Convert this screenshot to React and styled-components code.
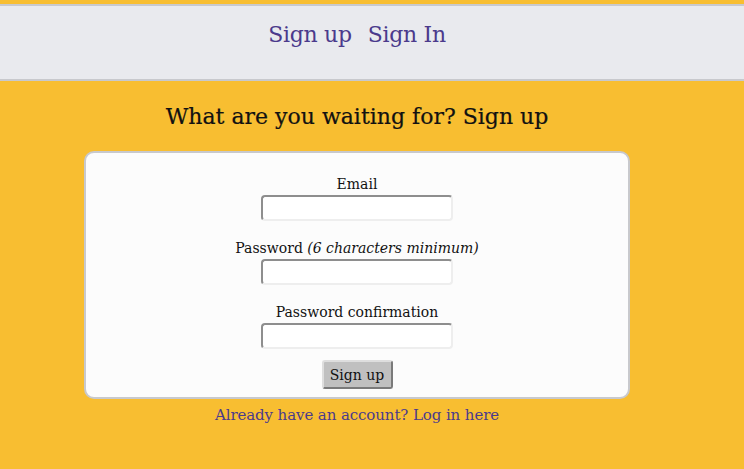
import React from "react";
import styled, { createGlobalStyle } from "styled-components";

const Global = createGlobalStyle`
  html, body { margin: 0; padding: 0; }
  body {
    background: #f8be31;
    font-family: "DejaVu Serif", "Liberation Serif", serif;
    color: #111;
  }
`;

const Page = styled.div`
  padding-top: 4px;
  min-height: 465px;
`;

const Header = styled.header`
  box-sizing: border-box;
  background: #e9eaee;
  border-top: 2px solid #c8c9cd;
  border-bottom: 2px solid #c8c9cd;
  height: 77px;
  display: flex;
  justify-content: center;
  align-items: flex-start;
  gap: 16px;
  padding: 16px 30px 0 0;
`;

const NavLink = styled.a`
  color: #4b3a8c;
  font-size: 22px;
  line-height: 26px;
  text-decoration: none;
  letter-spacing: -0.3px;
`;

const Main = styled.main`
  width: 714px;
  display: flex;
  flex-direction: column;
  align-items: center;
`;

const Title = styled.h1`
  margin: 20px 0 18px;
  font-size: 22px;
  font-weight: normal;
  letter-spacing: 0;
  line-height: 32px;
  -webkit-text-stroke: 0.2px #111;
`;

const Card = styled.form`
  box-sizing: border-box;
  flex-shrink: 0;
  width: 546px;
  height: 248px;
  background: #fcfcfc;
  border: 2px solid #c8c9cd;
  border-radius: 10px;
  display: flex;
  flex-direction: column;
  align-items: center;
  padding-top: 21px;
`;

const Field = styled.div`
  display: flex;
  flex-direction: column;
  align-items: center;
  & + & { margin-top: 17px; }
`;

const Label = styled.label`
  font-size: 14px;
  letter-spacing: 0;
  line-height: 20px;
  em { font-style: italic; }
`;

const Input = styled.input`
  box-sizing: border-box;
  width: 192px;
  height: 26px;
  border-radius: 4px;
  border: 2px solid;
  border-color: #8e8e8e #eeeeee #eeeeee #8e8e8e;
  background: #fff;
  margin-top: 1px;
`;

const Button = styled.button`
  box-sizing: border-box;
  margin-top: 11px;
  width: 71px;
  height: 29px;
  font-family: inherit;
  font-size: 14px;
  letter-spacing: 0;
  background: #c0c0c0;
  border: 2px solid;
  border-color: #dedede #7a7a7a #7a7a7a #dedede;
  border-radius: 3px;
  color: #111;
  padding: 0;
`;

const Footer = styled.a`
  margin-top: 7px;
  color: #4b3a8c;
  font-size: 15px;
  letter-spacing: -0.1px;
  text-decoration: none;
`;

export default function App() {
  return (
    <>
      <Global />
      <Page>
        <Header>
          <NavLink href="#">Sign up</NavLink>
          <NavLink href="#">Sign In</NavLink>
        </Header>
        <Main>
          <Title>What are you waiting for? Sign up</Title>
          <Card onSubmit={(e) => e.preventDefault()}>
            <Field>
              <Label>Email</Label>
              <Input type="email" />
            </Field>
            <Field>
              <Label>
                Password <em>(6 characters minimum)</em>
              </Label>
              <Input type="password" />
            </Field>
            <Field>
              <Label>Password confirmation</Label>
              <Input type="password" />
            </Field>
            <Button type="submit">Sign up</Button>
          </Card>
          <Footer href="#">Already have an account? Log in here</Footer>
        </Main>
      </Page>
    </>
  );
}
